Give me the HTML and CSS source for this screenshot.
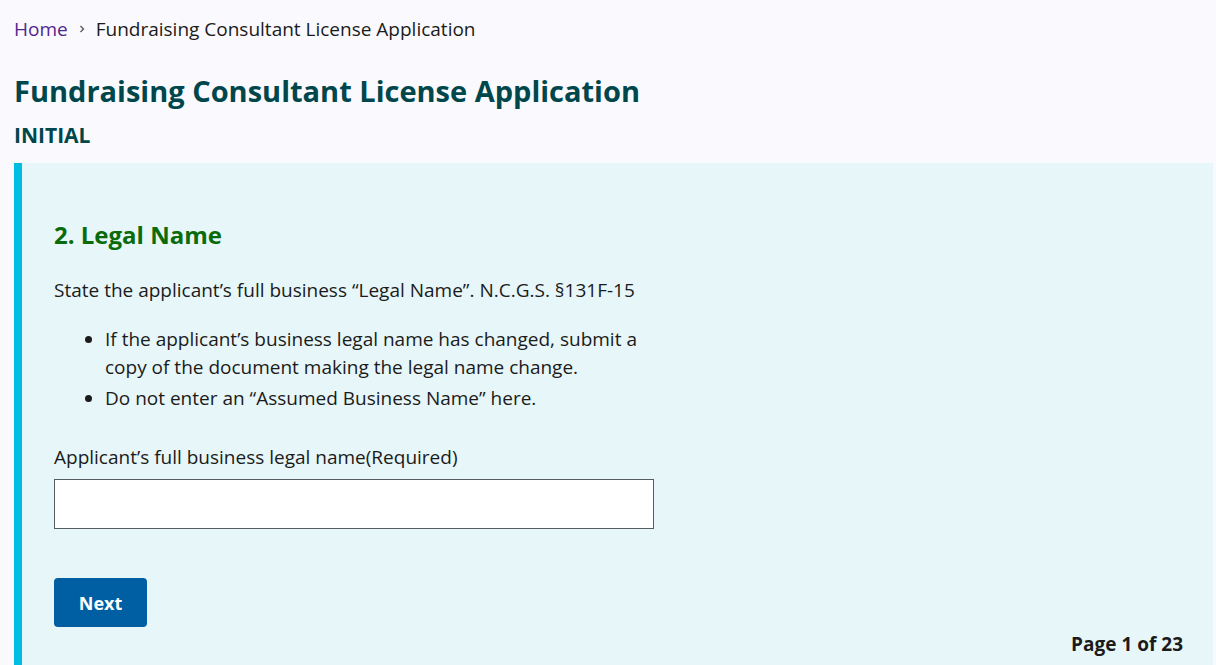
FILE: index.html
```html
<!DOCTYPE html>
<html lang="en">
<head>
<meta charset="utf-8">
<title>Fundraising Consultant License Application</title>
<link rel="stylesheet" href="styles.css">
</head>
<body>
<div class="page">
  <nav class="breadcrumb">
    <a class="crumb-link" href="#">Home</a>
    <svg class="chev" width="10" height="10" viewBox="0 0 10 10"><path d="M3.5 2 L6.5 5 L3.5 8" fill="none" stroke="#555" stroke-width="1.3"/></svg>
    <span class="crumb-current">Fundraising Consultant License Application</span>
  </nav>
  <h1 class="title">Fundraising Consultant License Application</h1>
  <div class="subtitle">INITIAL</div>
  <section class="panel">
    <h2 class="section-title">2. Legal Name</h2>
    <p class="intro">State the applicant’s full business “Legal Name”. N.C.G.S. §131F-15</p>
    <ul class="bullets">
      <li>If the applicant’s business legal name has changed, submit a copy of the document making the legal name change.</li>
      <li>Do not enter an “Assumed Business Name” here.</li>
    </ul>
    <label class="field-label" for="legal">Applicant’s full business legal name(Required)</label>
    <input class="field-input" id="legal" type="text">
    <button class="btn-next" type="button">Next</button>
    <div class="page-count">Page 1 of 23</div>
  </section>
</div>
</body>
</html>
```
FILE: styles.css
```css
html, body {
  margin: 0;
  padding: 0;
  background: #f9f9fe;
  font-family: "Open Sans", "Noto Sans", sans-serif;
  color: #1b1b1b;
}
.page {
  padding: 0 3px 0 14px;
}
.breadcrumb {
  display: flex;
  align-items: center;
  gap: 9px;
  padding-top: 16px;
  height: 26px;
  font-size: 19px;
}
.crumb-link {
  color: #54278f;
  text-decoration: none;
}
.crumb-current {
  color: #1b1b1b;
}
.title {
  margin: 29px 0 0;
  font-size: 29px;
  line-height: 40px;
  font-weight: 700;
  color: #00474b;
}
.subtitle {
  margin-top: 11px;
  font-size: 21px;
  line-height: 26px;
  font-weight: 700;
  color: #00474b;
}
.panel {
  margin-top: 15px;
  background: #e7f6f8;
  border-left: 8px solid #00bde3;
  padding: 57px 30px 10px 32px;
  min-height: 440px;
  box-sizing: border-box;
}
.section-title {
  margin: 0;
  font-size: 24px;
  line-height: 30px;
  font-weight: 700;
  color: #0a6b0a;
}
.intro {
  margin: 26px 0 0;
  font-size: 19px;
  line-height: 28px;
}
.bullets {
  margin: 21px 0 0;
  padding-left: 51px;
  width: 552px;
  font-size: 19px;
  line-height: 28px;
}
.bullets li + li {
  margin-top: 3px;
}
.field-label {
  display: block;
  margin-top: 31px;
  font-size: 19px;
  line-height: 28px;
}
.field-input {
  display: block;
  margin-top: 8px;
  width: 600px;
  height: 50px;
  box-sizing: border-box;
  border: 1px solid #565c65;
  background: #fff;
  font-size: 18px;
}
.btn-next {
  display: block;
  margin-top: 49px;
  width: 93px;
  height: 49px;
  border: 0;
  border-radius: 4px;
  background: #005ea2;
  color: #fff;
  font-family: inherit;
  font-size: 18px;
  font-weight: 700;
}
.page-count {
  text-align: right;
  margin-top: 3px;
  font-size: 19px;
  line-height: 28px;
  font-weight: 700;
}
```
